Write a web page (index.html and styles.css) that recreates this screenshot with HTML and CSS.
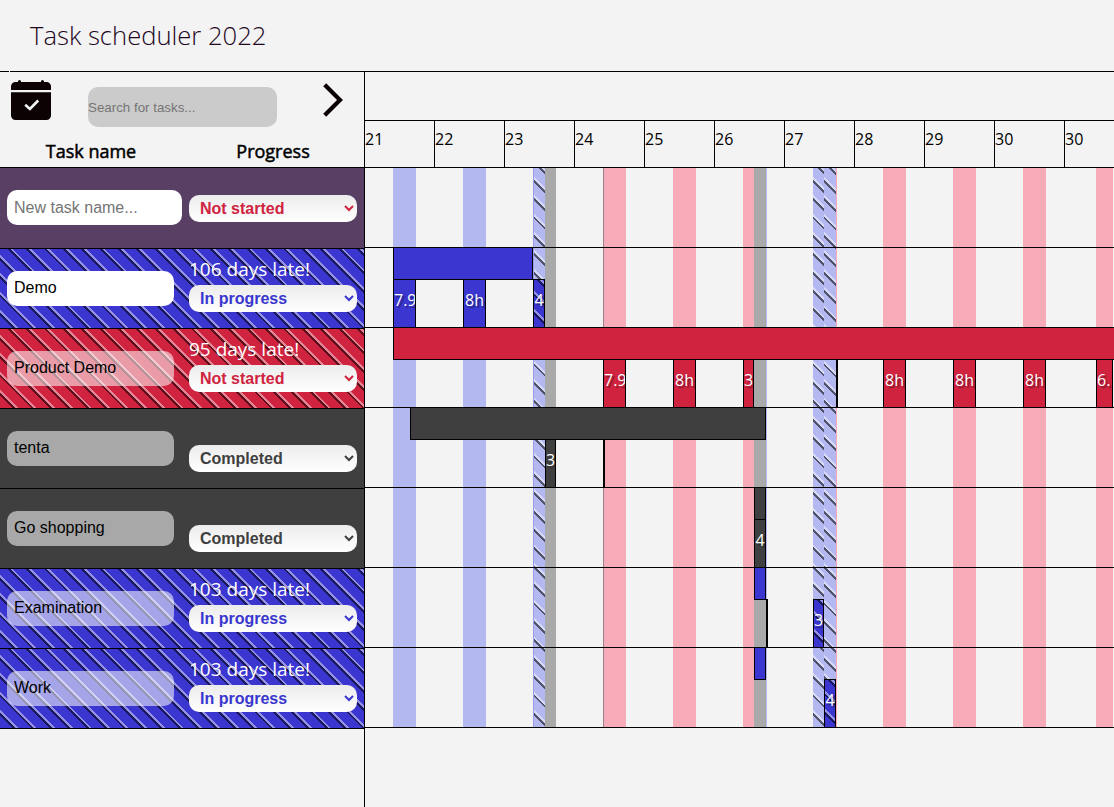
FILE: index.html
```html
<!DOCTYPE html>
<html lang="en">
<head>
<meta charset="utf-8">
<title>Task scheduler 2022</title>
<link rel="stylesheet" href="styles.css">
</head>
<body>
<header class="top"><h1 class="title">Task scheduler 2022</h1></header>
<main class="main">
  <section class="side">
    <div class="tools">
      <svg class="cal" viewBox="0 0 40 40" width="40" height="40"><path fill="#0d0203" d="M0 10V6.500a4.500 4.500 0 0 1 4.500-4.500H7V1.500a1.500 1.500 0 0 1 3 0V2h20v-.5a1.500 1.500 0 0 1 3 0V2h2.500A4.500 4.500 0 0 1 40 6.500V10zM0 12.200h40v23.300a4.500 4.500 0 0 1-4.500 4.500h-31A4.500 4.500 0 0 1 0 35.500z"/><path d="M14.200 24.800l4.700 4.200 8.300-8.500" fill="none" stroke="#f3f3f3" stroke-width="2.600"/></svg>
      <input class="search" type="text" placeholder="Search for tasks...">
      <svg class="next" viewBox="0 0 20 34" width="20" height="34"><path d="M1.700 1.700L17 17L1.700 32.300" fill="none" stroke="#0d0203" stroke-width="4.200"/></svg>
    </div>
    <div class="heads"><span class="head">Task name</span><span class="head">Progress</span></div>
    <div class="task new"><input class="name" type="text" placeholder="New task name..."><div class="prog"><select class="status red"><option>Not started</option></select></div></div>
    <div class="task blue-bg late"><input class="name solid" type="text" value="Demo"><div class="prog"><span class="days">106 days late!</span><select class="status blue"><option>In progress</option></select></div></div>
    <div class="task red-bg late"><input class="name" type="text" value="Product Demo"><div class="prog"><span class="days">95 days late!</span><select class="status red"><option>Not started</option></select></div></div>
    <div class="task gray-bg"><input class="name" type="text" value="tenta"><div class="prog"><select class="status gray"><option>Completed</option></select></div></div>
    <div class="task gray-bg"><input class="name" type="text" value="Go shopping"><div class="prog"><select class="status gray"><option>Completed</option></select></div></div>
    <div class="task blue-bg late"><input class="name" type="text" value="Examination"><div class="prog"><span class="days">103 days late!</span><select class="status blue"><option>In progress</option></select></div></div>
    <div class="task blue-bg late"><input class="name" type="text" value="Work"><div class="prog"><span class="days">103 days late!</span><select class="status blue"><option>In progress</option></select></div></div>
  </section>
  <section class="chart">
    <div class="months"></div>
    <div class="dates"><span class="date">21</span><span class="date">22</span><span class="date">23</span><span class="date">24</span><span class="date">25</span><span class="date">26</span><span class="date">27</span><span class="date">28</span><span class="date">29</span><span class="date">30</span><span class="date">30</span></div>
    <div class="rows">
      <i class="band blue-bg" style="left:28px;width:23px"></i>
      <i class="band blue-bg" style="left:98px;width:23px"></i>
      <i class="band blue-bg late edge" style="left:168px;width:12px"></i>
      <i class="band gray-bg" style="left:180px;width:11px"></i>
      <i class="band red-bg edge" style="left:238px;width:23px"></i>
      <i class="band red-bg" style="left:308px;width:23px"></i>
      <i class="band red-bg" style="left:378px;width:11px"></i>
      <i class="band gray-bg" style="left:389px;width:12px"></i>
      <i class="band blue-bg" style="left:401px;width:1px"></i>
      <i class="band blue-bg late" style="left:448px;width:11px"></i>
      <i class="band blue-bg late" style="left:459px;width:12px"></i>
      <i class="band red-bg" style="left:471px;width:1px"></i>
      <i class="band red-bg" style="left:518px;width:23px"></i>
      <i class="band red-bg" style="left:588px;width:23px"></i>
      <i class="band red-bg" style="left:658px;width:23px"></i>
      <i class="band red-bg" style="left:731px;width:17px"></i>
      <div class="row"></div>
      <div class="row">
        <div class="bar blue-bg" style="left:28px;width:140px"></div>
        <div class="cell blue-bg" style="left:28px;width:23px">7.9</div>
        <div class="cell blue-bg" style="left:98px;width:23px">8h</div>
        <div class="cell blue-bg late" style="left:168px;width:12px">4</div>
      </div>
      <div class="row">
        <div class="bar red-bg" style="left:28px;width:760px"></div>
        <div class="cell red-bg" style="left:238px;width:23px">7.9</div>
        <div class="cell red-bg" style="left:308px;width:23px">8h</div>
        <div class="cell red-bg" style="left:378px;width:11px">3</div>
        <div class="cell" style="left:471px;width:2px"></div>
        <div class="cell red-bg" style="left:518px;width:23px">8h</div>
        <div class="cell red-bg" style="left:588px;width:23px">8h</div>
        <div class="cell red-bg" style="left:658px;width:23px">8h</div>
        <div class="cell red-bg clip" style="left:731px;width:17px">6.</div>
      </div>
      <div class="row">
        <div class="bar gray-bg" style="left:45px;width:356px"></div>
        <div class="cell gray-bg" style="left:180px;width:11px">3</div>
        <div class="cell" style="left:238px;width:2px"></div>
      </div>
      <div class="row">
        <div class="bar gray-bg" style="left:389px;width:12px"></div>
        <div class="cell gray-bg" style="left:389px;width:12px">4</div>
      </div>
      <div class="row">
        <div class="bar blue-bg" style="left:389px;width:12px"></div>
        <div class="cell" style="left:401px;width:2px"></div>
        <div class="cell blue-bg late" style="left:448px;width:11px">3</div>
      </div>
      <div class="row">
        <div class="bar blue-bg" style="left:389px;width:12px"></div>
        <div class="cell blue-bg late" style="left:459px;width:12px">4</div>
      </div>
    </div>
  </section>
</main>
</body>
</html>
```
FILE: styles.css
```css
* { box-sizing: border-box; }
body {
  margin: 0;
  height: 807px;
  overflow: hidden;
  background: #f3f3f3;
  color: #000;
  font-family: "Open Sans", "Noto Sans", sans-serif;
}
.top {
  height: 72px; padding: 18px 30px 0;
  background: linear-gradient(90deg, #000 9px, transparent 9px 10px, #000 10px) bottom / 100% 1px no-repeat;
}
.title { margin: 0; font-size: 25.6px; line-height: 36px; font-weight: 345; color: #22061c; }
.main { display: flex; height: 735px; }
.side { width: 365px; flex: none; border-right: 1px solid #000; }
.tools { display: flex; height: 64px; padding: 8px 21px 0 11px; align-items: flex-start; }
.cal { flex: none; margin-right: 37px; }
.search {
  width: 189px; height: 40px; margin-top: 7px; padding: 0;
  border: 0; border-radius: 10px; background: #cbcbcb;
  font: 13.333px "Liberation Sans", Arial, sans-serif;
}
.next { margin: 3px 0 0 46px; }
.heads { display: grid; grid-template-columns: 182px 182px; height: 32px; border-bottom: 1px solid #000; }
.head { text-align: center; font-size: 18px; line-height: 31px; font-weight: 500; -webkit-text-stroke: .5px #000; }
.task {
  display: grid; grid-template-columns: 167px 168px; column-gap: 15px;
  height: 80px; padding: 22px 7px 0; border-bottom: 1px solid #000; align-items: start;
}
.new { height: 81px; background-color: #5a3f65; }
.name {
  width: 167px; height: 35px; padding: 0 7px 2px; border: 0; border-radius: 10px;
  background: rgba(255, 255, 255, .55);
  font: 16px "Liberation Sans", Arial, sans-serif; color: #000;
}
.solid, .new .name { background: #fff; }
.new .name { width: 175px; padding-bottom: 0; }
.prog { display: flex; flex-direction: column; justify-content: flex-end; height: 41px; }
.new .prog { height: 32px; }
.days { color: #fff; font-size: 19px; line-height: 24px; margin-bottom: 4px; white-space: nowrap; }
.status {
  width: 168px; height: 27px; padding: 0 0 0 7px; flex: none;
  border: 0; border-radius: 10px;
  background-color: #fff; background-image: linear-gradient(#ececec, #fff);
  font: bold 16px "Liberation Sans", Arial, sans-serif;
}
.red { color: #cf233f; }
.blue { color: #3a36cf; }
.gray { color: #3f3f3f; }
.blue-bg { background-color: #3a36cf; }
.red-bg { background-color: #cf233f; }
.gray-bg { background-color: #3f3f3f; }
.late {
  background-image: repeating-linear-gradient(45deg, transparent 0 9px, rgba(0, 0, 0, .55) 9px 11px, rgba(255, 255, 255, .45) 11px 13px);
}
.chart { flex: 1; min-width: 0; overflow: hidden; }
.months { height: 49px; border-bottom: 1px solid #000; }
.dates { display: flex; height: 47px; border-bottom: 1px solid #000; }
.date { flex: none; width: 70px; border-right: 1px solid #000; font-size: 16px; line-height: 36px; font-weight: 370; }
.rows { position: relative; height: 560px; }
.row { position: relative; height: 80px; border-bottom: 1px solid #000; }
.band { position: absolute; top: 0; height: 560px; }
.band.blue-bg { background-color: #b3b8f0; }
.band.red-bg { background-color: #f7abb8; }
.band.gray-bg { background-color: #a9a9a9; }
.band.red-bg.edge { border-left: 1px solid #99828a; }
.band.blue-bg.edge { border-left: 1px solid #999de8; }
.bar { position: absolute; top: -1px; height: 33px; border: 1px solid #000; }
.cell {
  position: absolute; top: 31px; height: 49px; border: 1px solid #000; overflow: hidden;
  color: #fff; font-size: 16px; line-height: 41px; white-space: nowrap; text-align: center;
  text-shadow: 2px 2px 1px rgba(0, 0, 0, .35);
}
.cell.clip { text-align: left; }
```
